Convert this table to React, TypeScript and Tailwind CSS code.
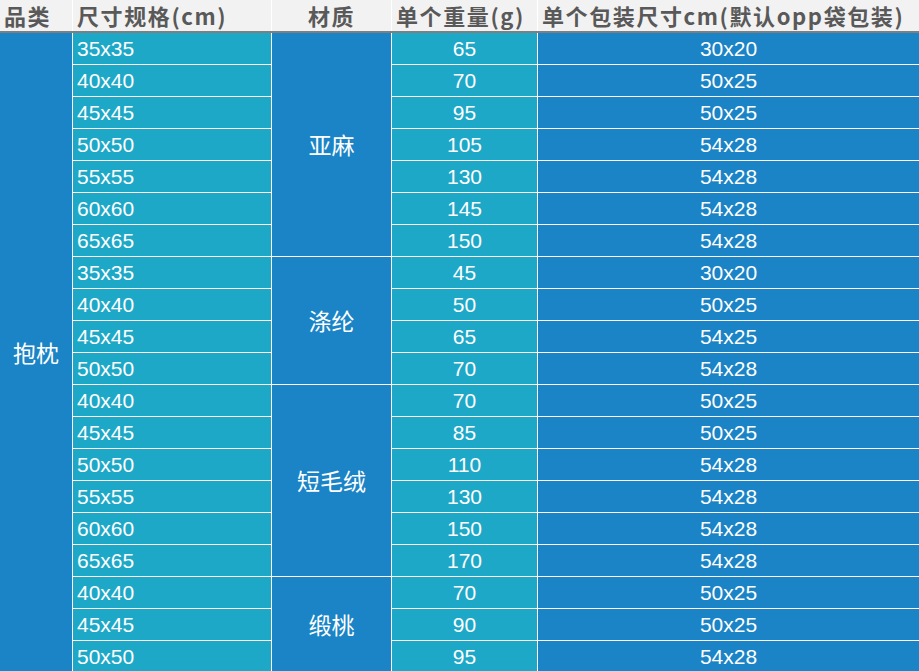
import React from 'react';

type Row = { size: string; weight: string; pack: string };
type Group = { material: string; rows: Row[] };

const groups: Group[] = [
  {
    material: '亚麻',
    rows: [
      { size: '35x35', weight: '65', pack: '30x20' },
      { size: '40x40', weight: '70', pack: '50x25' },
      { size: '45x45', weight: '95', pack: '50x25' },
      { size: '50x50', weight: '105', pack: '54x28' },
      { size: '55x55', weight: '130', pack: '54x28' },
      { size: '60x60', weight: '145', pack: '54x28' },
      { size: '65x65', weight: '150', pack: '54x28' },
    ],
  },
  {
    material: '涤纶',
    rows: [
      { size: '35x35', weight: '45', pack: '30x20' },
      { size: '40x40', weight: '50', pack: '50x25' },
      { size: '45x45', weight: '65', pack: '54x25' },
      { size: '50x50', weight: '70', pack: '54x28' },
    ],
  },
  {
    material: '短毛绒',
    rows: [
      { size: '40x40', weight: '70', pack: '50x25' },
      { size: '45x45', weight: '85', pack: '50x25' },
      { size: '50x50', weight: '110', pack: '54x28' },
      { size: '55x55', weight: '130', pack: '54x28' },
      { size: '60x60', weight: '150', pack: '54x28' },
      { size: '65x65', weight: '170', pack: '54x28' },
    ],
  },
  {
    material: '缎桃',
    rows: [
      { size: '40x40', weight: '70', pack: '50x25' },
      { size: '45x45', weight: '90', pack: '50x25' },
      { size: '50x50', weight: '95', pack: '54x28' },
    ],
  },
];

const cols = 'grid grid-cols-[72px_198px_119px_145px_1fr] gap-x-px';
const cjk = "font-['Noto_Sans_CJK_SC',sans-serif]";
const num = "font-['Liberation_Sans','Noto_Sans_CJK_SC',sans-serif]";

export default function App() {
  const total = groups.reduce((n, g) => n + g.rows.length, 0);

  return (
    <div className="h-screen w-full overflow-hidden bg-white">
      {/* 表头 */}
      <div className={`${cols} h-[33px] border-b-2 border-[#7f7f7f] bg-white`}>
        {['品类', '尺寸规格(cm)', '材质', '单个重量(g)', '单个包装尺寸cm(默认opp袋包装)'].map((t, i) => (
          <div
            key={t}
            className={`flex items-center bg-[#f2f2f2] ${cjk} text-[22px] font-bold leading-[31px] tracking-[1.6px] text-[#595959] whitespace-nowrap ${
              i === 2 ? 'justify-center' : 'pl-[4px]'
            }`}
          >
            {t}
          </div>
        ))}
      </div>

      {/* 数据 */}
      <div className={`${cols} gap-y-px auto-rows-[31px] bg-white`}>
        <div
          className={`col-start-1 flex items-center justify-center bg-[#1a84c6] ${cjk} text-[23px] text-white`}
          style={{ gridRow: `span ${total} / span ${total}` }}
        >
          抱枕
        </div>
        {groups.map((g) =>
          g.rows.map((r, i) => (
            <React.Fragment key={g.material + r.size}>
              <div className={`col-start-2 flex items-center bg-[#1ea8c8] pl-[4px] ${num} text-[21px] text-white`}>
                {r.size}
              </div>
              {i === 0 && (
                <div
                  className={`col-start-3 flex items-center justify-center bg-[#1a84c6] ${cjk} text-[23px] text-white`}
                  style={{ gridRow: `span ${g.rows.length} / span ${g.rows.length}` }}
                >
                  {g.material}
                </div>
              )}
              <div className={`col-start-4 flex items-center justify-center bg-[#1ea8c8] ${num} text-[21px] text-white`}>
                {r.weight}
              </div>
              <div className={`col-start-5 flex items-center justify-center bg-[#1a84c6] ${num} text-[21px] text-white`}>
                {r.pack}
              </div>
            </React.Fragment>
          ))
        )}
      </div>
    </div>
  );
}
